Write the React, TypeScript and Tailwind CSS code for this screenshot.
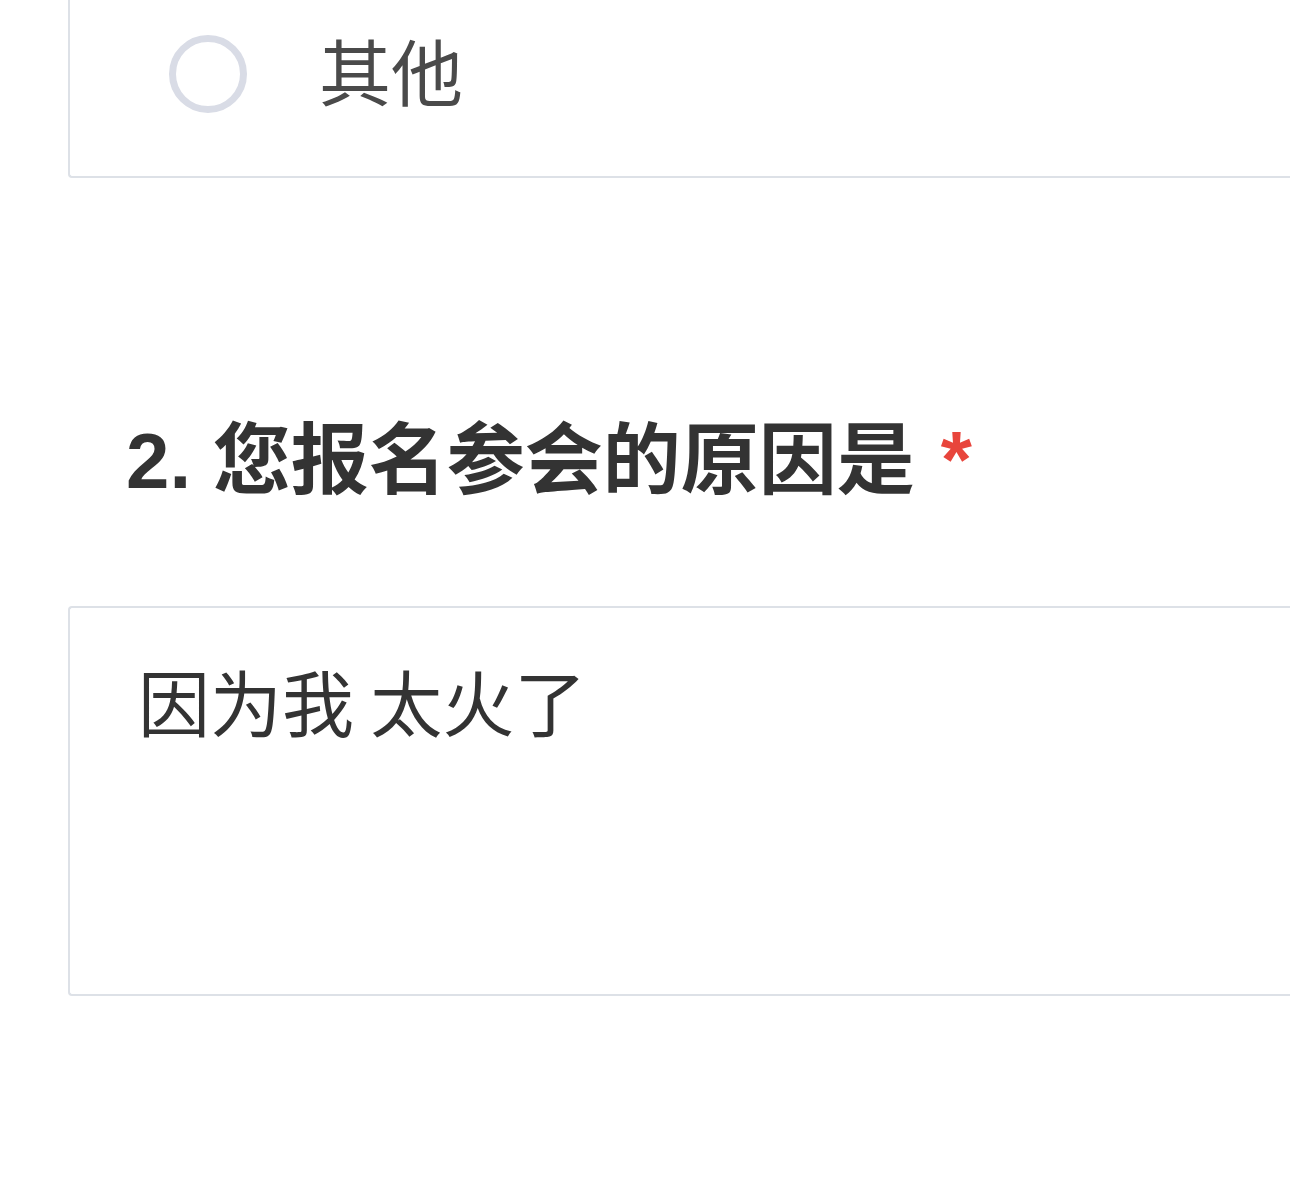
import React from 'react';

const cjk = '"Noto Sans CJK SC", "Noto Sans", sans-serif';
const latinCjk = '"Liberation Sans", "Noto Sans CJK SC", sans-serif';

function RadioOption({ label }: { label: string }) {
  return (
    <div className="ml-[68px] h-[178px] rounded-bl-[4px] border-b-2 border-l-2 border-[#dde1e7] bg-white pt-[35px]">
      <div className="flex h-[78px] items-center">
        <span className="ml-[99px] h-[78px] w-[78px] rounded-full border-[7px] border-[#d9dce6]" />
        <span className="-mt-[10px] ml-[72px] text-[72px] leading-none text-[#4a4a4a]" style={{ fontFamily: cjk }}>
          {label}
        </span>
      </div>
    </div>
  );
}

export default function App() {
  return (
    <div className="min-h-[1192px] w-full overflow-hidden bg-white">
      <RadioOption label="其他" />

      <h2
        className="ml-[126px] mt-[244px] flex items-start text-[78px] font-bold leading-none text-[#333333]"
        style={{ fontFamily: latinCjk }}
      >
        <span>2. 您报名参会的原因是</span>
        <span className="ml-[26px] -mt-[2px] text-[80px] leading-none text-[#e8453c]">*</span>
      </h2>

      <div className="ml-[68px] mt-[106px] h-[390px] rounded-l-[4px] border-y-2 border-l-2 border-[#dde1e7] bg-white pl-[68px] pt-[56px]">
        <p className="text-[72px] leading-none text-[#333333]" style={{ fontFamily: cjk }}>
          因为我 太火了
        </p>
      </div>
    </div>
  );
}
